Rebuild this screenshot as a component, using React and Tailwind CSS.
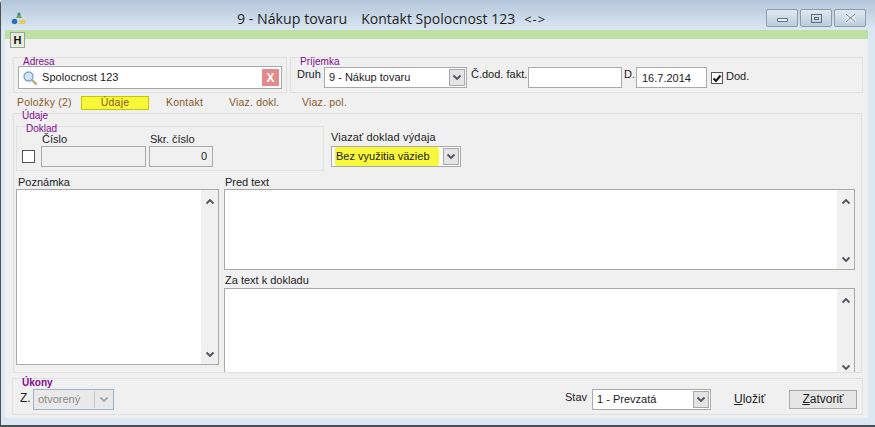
import React from 'react';

const Chevron = ({ up, color = '#4d5560' }) => (
  <svg width="10" height="7" viewBox="0 0 10 7" fill="none">
    <path d={up ? 'M1.5 5.5 L5 2 L8.5 5.5' : 'M1.5 1.5 L5 5 L8.5 1.5'} stroke={color} strokeWidth="1.8" />
  </svg>
);

const Legend = ({ children, className }) => (
  <span className={`absolute text-[10px] leading-[12px] text-[#820a8e] ${className}`}>{children}</span>
);

const Field = ({ className, children }) => (
  <div className={`flex items-center border border-[#a9a9a9] bg-white text-[11px] leading-none text-[#222] ${className}`}>
    {children}
  </div>
);

const ComboArrow = ({ color }) => (
  <div className="mr-[1px] flex h-[17px] w-[16px] items-center justify-center border border-[#a8a8a8] bg-[#e4e4e4]">
    <Chevron color={color} />
  </div>
);

const Memo = ({ className }) => (
  <div className={`flex justify-end border border-[#a9a9a9] bg-white ${className}`}>
    <div className="flex w-[17px] flex-col items-center justify-between bg-[#f0f0f0] pb-[6px] pt-[8px]">
      <Chevron up />
      <Chevron />
    </div>
  </div>
);

const WinButton = ({ children }) => (
  <div className="flex h-[18px] w-[32px] items-center justify-center rounded-[2px] border border-[#8c9cae] bg-gradient-to-b from-[#dfe9f3] to-[#bdcddd]">
    {children}
  </div>
);

export default function App() {
  return (
    <div className="flex h-[427px] w-[875px] flex-col overflow-hidden rounded-tl-[4px] border-b-2 border-l border-[#4a4f55] bg-[#dbe8f4] font-['Liberation_Sans',sans-serif] text-[11px] text-[#222]">
      {/* title bar */}
      <div className="flex h-[30px] shrink-0 items-center bg-gradient-to-b from-[#b3c6d9] to-[#dce8f3] pl-[10px] pr-[9px] pt-[6px]">
        <svg width="16" height="14" viewBox="0 0 16 14">
          <path d="M8 1 L11 7 L5 7 Z" fill="#6fa84f" />
          <circle cx="3.5" cy="10.5" r="2.8" fill="#2f6fb5" />
          <path d="M9 9 L15 9 L14 13 L8 13 Z" fill="#e8c860" />
          <circle cx="8" cy="3" r="1.6" fill="#3d8a9a" />
        </svg>
        <div className="ml-[210px] mt-[2px] flex items-baseline whitespace-pre font-['Open_Sans',sans-serif] text-[14.2px] leading-none text-[#1f1f1f]">
          <span>9 - Nákup tovaru</span>
          <span className="ml-[14px] text-[14px]">Kontakt Spolocnost 123</span>
          <span className="ml-[9px] text-[13px] tracking-[1px]">{'<->'}</span>
        </div>
        <div className="ml-auto flex gap-[2px]">
          <WinButton>
            <div className="mt-[3px] h-[4px] w-[11px] rounded-[1px] border border-[#5d6b7a] bg-[#eef3f8]" />
          </WinButton>
          <WinButton>
            <div className="flex h-[9px] w-[11px] items-center justify-center border border-[#5d6b7a]">
              <div className="h-[3px] w-[5px] border border-[#5d6b7a]" />
            </div>
          </WinButton>
          <WinButton>
            <svg width="13" height="10" viewBox="0 0 13 10" fill="none">
              <path d="M2 1 L11 9 M11 1 L2 9" stroke="#eef3f8" strokeWidth="3.4" />
              <path d="M2 1 L11 9 M11 1 L2 9" stroke="#6a7888" strokeWidth="1" />
            </svg>
          </WinButton>
        </div>
      </div>

      {/* green strip with the H button hanging over it */}
      <div className="relative ml-[4px] mr-[7px] h-[9px] shrink-0 bg-[#bfe0a5]">
        <div className="absolute left-[5px] top-[2px] flex h-[16px] w-[15px] items-center justify-center border border-[#9aa59a] bg-[#e6eee0] text-[11px] font-bold leading-none text-[#111]">
          H
        </div>
      </div>

      <div className="ml-[4px] mr-[7px] flex h-[379px] shrink-0 flex-col overflow-hidden bg-[#f0f0f0] pl-[8px]">
        {/* Adresa + Prijemka */}
        <div className="mt-[18px] flex h-[36px] shrink-0 gap-[3px]">
          <div className="relative flex w-[274px] items-end border border-[#e0e0e0] px-[4px] pb-[3px]">
            <Legend className="left-[9px] top-[-2px]">Adresa</Legend>
            <Field className="h-[23px] w-[265px] pl-[3px]">
              <svg width="16" height="16" viewBox="0 0 16 16" fill="none">
                <circle cx="6.5" cy="6.5" r="4.5" fill="#cfe4f7" stroke="#7ea6cc" strokeWidth="1.4" />
                <path d="M10 10 L14.5 14.5" stroke="#b9a37c" strokeWidth="2.4" />
              </svg>
              <span className="ml-[4px] tracking-[0.05px]">Spolocnost 123</span>
              <div className="ml-auto mr-[2px] flex h-[17px] w-[17px] items-center justify-center bg-[#e58a8c] text-[12px] font-bold text-white">
                X
              </div>
            </Field>
          </div>
          <div className="relative flex w-[573px] items-end border border-[#e0e0e0] pb-[4px] pl-[6px]">
            <Legend className="left-[9px] top-[-2px]">Príjemka</Legend>
            <span className="mb-[6px] w-[27px]">Druh</span>
            <Field className="h-[21px] w-[143px] pl-[4px]">
              <span>9 - Nákup tovaru</span>
              <div className="ml-auto"><ComboArrow /></div>
            </Field>
            <span className="mb-[6px] ml-[4px] w-[57px]">Č.dod. fakt.</span>
            <Field className="h-[21px] w-[94px]" />
            <span className="mb-[6px] ml-[2px] w-[12px]">D.</span>
            <Field className="h-[21px] w-[71px] pl-[5px]">
              <span className="mt-[1px]">16.7.2014</span>
            </Field>
            <div className="mb-[4px] ml-[4px] flex h-[12px] w-[12px] items-center justify-center border border-[#555] bg-white">
              <svg width="10" height="9" viewBox="0 0 10 9" fill="none">
                <path d="M1.5 4.5 L4 7 L8.5 1.5" stroke="#111" strokeWidth="2" />
              </svg>
            </div>
            <span className="mb-[4px] ml-[3px]">Dod.</span>
          </div>
        </div>

        {/* tabs */}
        <div className="flex h-[20px] shrink-0 items-center text-[10.5px] tracking-[0.2px] text-[#8a5a2b]">
          <span className="ml-[4px] w-[64px]">Položky (2)</span>
          <div className="flex h-[14px] w-[68px] items-center justify-center border border-[#c9c800] bg-[#f8f83a]">Údaje</div>
          <span className="ml-[17px] w-[63px]">Kontakt</span>
          <span className="w-[73px]">Viaz. dokl.</span>
          <span>Viaz. pol.</span>
        </div>

        {/* Udaje */}
        <div className="relative h-[260px] w-[849px] shrink-0 border border-[#e0e0e0]">
          <Legend className="left-[8px] top-[-4px]">Údaje</Legend>
          <div className="h-full overflow-hidden pl-[2px]">
            <div className="mt-[12px] flex h-[45px]">
              <div className="relative flex h-[45px] w-[308px] items-end border border-[#e0e0e0] pb-[3px] pl-[5px]">
                <Legend className="left-[9px] top-[-4px]">Doklad</Legend>
                <div className="mb-[4px] h-[13px] w-[13px] border border-[#555] bg-white" />
                <div className="ml-[6px] flex flex-col">
                  <span className="mb-[1px] ml-[1px] leading-[11px]">Číslo</span>
                  <div className="h-[21px] w-[105px] border border-[#a9a9a9] bg-[#f0f0f0]" />
                </div>
                <div className="ml-[3px] flex flex-col">
                  <span className="mb-[1px] ml-[1px] leading-[11px]">Skr. číslo</span>
                  <div className="flex h-[21px] w-[64px] items-center justify-end border border-[#a9a9a9] bg-[#f0f0f0] pr-[5px]">0</div>
                </div>
              </div>
              <div className="ml-[7px] flex flex-col pt-[5px]">
                <span className="mb-[3px] leading-[12px] tracking-[0.15px]">Viazať doklad výdaja</span>
                <Field className="h-[21px] w-[130px] pl-[3px]">
                  <span className="flex h-[19px] w-[104px] items-center rounded-[2px] bg-[#f8f83a] pl-[1px]">Bez využitia väzieb</span>
                  <div className="ml-auto"><ComboArrow /></div>
                </Field>
              </div>
            </div>
            <div className="mt-[4px] flex">
              <div className="flex w-[208px] flex-col">
                <span className="ml-[2px] leading-[14px]">Poznámka</span>
                <Memo className="h-[176px] w-[203px]" />
              </div>
              <div className="flex flex-col">
                <span className="ml-[1px] mt-[1px] leading-[13px]">Pred text</span>
                <Memo className="h-[81px] w-[631px]" />
                <span className="ml-[1px] mt-[3px] leading-[15px]">Za text k dokladu</span>
                <Memo className="h-[90px] w-[631px]" />
              </div>
            </div>
          </div>
        </div>

        {/* Ukony */}
        <div className="relative mt-[5px] flex h-[37px] w-[851px] shrink-0 -translate-x-[1px] items-center border border-[#e0e0e0] pl-[7px] pr-[5px] pt-[5px]">
          <Legend className="left-[9px] top-[-2px] text-[9.5px] font-bold">Úkony</Legend>
          <span className="mb-[3px] w-[13px] text-[12px]">Z.</span>
          <div className="flex h-[21px] w-[81px] items-center border border-[#9fb3c8] bg-[#e9e9e9] pl-[4px] text-[#8a8a8a]">
            otvorený
            <div className="ml-auto mr-[1px] flex h-[17px] w-[18px] items-center justify-center border-l border-[#c8c8c8]">
              <Chevron color="#a0a8b0" />
            </div>
          </div>
          <span className="mb-[3px] ml-auto w-[27px]">Stav</span>
          <Field className="h-[21px] w-[119px] pl-[4px]">
            <span>1 - Prevzatá</span>
            <div className="ml-auto"><ComboArrow /></div>
          </Field>
          <span className="ml-[23px] w-[55px] text-[12px]"><u>U</u>ložiť</span>
          <div className="flex h-[19px] w-[68px] items-center justify-center border border-[#a9a9a9] bg-[#e6e6e6] text-[12px]">
            <span><u>Z</u>atvoriť</span>
          </div>
        </div>
      </div>
    </div>
  );
}
